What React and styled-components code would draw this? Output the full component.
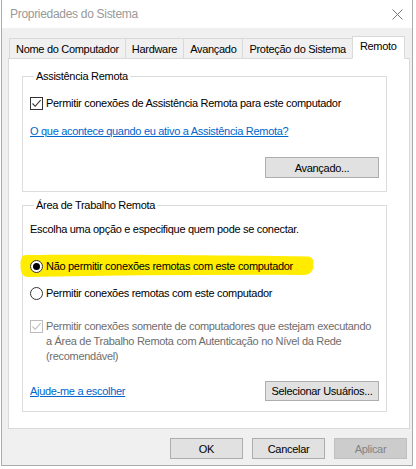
import styled, { createGlobalStyle } from "styled-components";

const GlobalStyle = createGlobalStyle`
  body {
    margin: 0;
    background: #ffffff;
    font-family: "Liberation Sans", Arial, sans-serif;
    font-size: 11px;
    letter-spacing: -0.3px;
    color: #000;
  }
`;

const Window = styled.div`
  margin-left: 1px;
  width: 412px;
  height: 466px;
  box-sizing: border-box;
  border: 1px solid #ababab;
  border-top: none;
  background: #f0f0f0;
  display: flex;
  flex-direction: column;
`;

const TitleBar = styled.div`
  height: 28px;
  background: #fff;
  display: flex;
  align-items: center;
  justify-content: space-between;
  padding: 0 9px 0 8px;
  color: #999;
  font-size: 12px;
`;

const Body = styled.div`
  padding: 7px 0 0 6px;
  display: flex;
  flex-direction: column;
`;

const TabRow = styled.div`
  display: flex;
  align-items: flex-end;
  padding-left: 1px;
  height: 23px;
  position: relative;
  z-index: 1;
`;

const Tab = styled.div`
  height: ${(p) => (p.$active ? "23px" : "20px")};
  box-sizing: border-box;
  padding: 0 ${(p) => (p.$active ? "7px" : "6px")};
  margin-left: -1px;
  margin-bottom: ${(p) => (p.$active ? "-1px" : "0")};
  border: 1px solid #d9d9d9;
  border-bottom: ${(p) => (p.$active ? "1px solid #fff" : "none")};
  background: ${(p) => (p.$active ? "#fff" : "#f0f0f0")};
  display: flex;
  align-items: ${(p) => (p.$active ? "flex-start" : "center")};
  padding-top: ${(p) => (p.$active ? "3px" : "0")};
  white-space: nowrap;
  &:first-child {
    margin-left: 0;
  }
`;

const Panel = styled.div`
  width: 402px;
  height: 371px;
  box-sizing: border-box;
  background: #fff;
  border: 1px solid #d9d9d9;
  padding: 10px 0 0 13px;
`;

const Group = styled.fieldset`
  margin: ${(p) => p.$gap || 0}px 0 0;
  width: 365px;
  box-sizing: border-box;
  border: 1px solid #dcdcdc;
  padding: 0 7px ${(p) => p.$bottom}px 7px;
  min-width: 0;
  display: flex;
  flex-direction: column;
  align-items: flex-start;
`;

const Legend = styled.legend`
  padding: 0 2px;
  margin-left: 4px;
  line-height: 15px;
`;

const Row = styled.div`
  display: flex;
  align-items: ${(p) => (p.$top ? "flex-start" : "center")};
  gap: 3px;
  line-height: 15px;
  margin-top: ${(p) => p.$mt || 0}px;
  color: ${(p) => (p.$disabled ? "#6d6d6d" : "#000")};
  position: relative;
  white-space: nowrap;
`;

const Label = styled.span`
  position: relative;
  z-index: 1;
`;

const Text = styled.div`
  line-height: 15px;
  margin-top: ${(p) => p.$mt || 0}px;
  white-space: nowrap;
`;

const Link = styled.a`
  color: #0066cc;
  text-decoration: underline;
  line-height: 15px;
  cursor: pointer;
  white-space: nowrap;
`;

const Box = styled.span`
  width: 13px;
  height: 13px;
  box-sizing: border-box;
  border: 1px solid ${(p) => (p.$disabled ? "#bcbcbc" : "#333")};
  background: #fff;
  display: inline-flex;
  align-items: center;
  justify-content: center;
  flex-shrink: 0;
  margin-top: ${(p) => (p.$disabled ? "1px" : "0")};
  position: relative;
  z-index: 1;
`;

const Radio = styled.span`
  width: 13px;
  height: 13px;
  box-sizing: border-box;
  border-radius: 50%;
  border: 1px solid #333;
  background: #fff;
  display: inline-flex;
  align-items: center;
  justify-content: center;
  flex-shrink: 0;
  position: relative;
  z-index: 1;
  &::after {
    content: "";
    width: 7px;
    height: 7px;
    border-radius: 50%;
    background: ${(p) => (p.$checked ? "#000" : "transparent")};
  }
`;

// highlighter stroke drawn behind the first option
const Highlight = styled.svg`
  position: absolute;
  left: -10px;
  top: -5px;
  width: 294px;
  height: 24px;
  z-index: 0;
`;

const Actions = styled.div`
  display: flex;
  align-items: center;
  justify-content: space-between;
  align-self: stretch;
  margin-top: ${(p) => p.$mt || 0}px;
`;

const Button = styled.button`
  width: ${(p) => p.$w || 73}px;
  height: ${(p) => p.$h || 21}px;
  box-sizing: border-box;
  border: 1px solid ${(p) => (p.disabled ? "#bfbfbf" : "#adadad")};
  background: ${(p) => (p.disabled ? "#cccccc" : "#e1e1e1")};
  color: ${(p) => (p.disabled ? "#838383" : "#000")};
  font-family: inherit;
  font-size: 11px;
  letter-spacing: -0.3px;
  white-space: nowrap;
  padding: 0;
`;

const Footer = styled.div`
  display: flex;
  justify-content: flex-end;
  gap: 9px;
  padding: 9px 5px 0 0;
`;

const Check = ({ color }) => (
  <svg width="11" height="11" viewBox="0 0 11 11">
    <path d="M1.5 5.5 L4.2 8.3 L9.6 2.2" fill="none" stroke={color} strokeWidth="1.1" />
  </svg>
);

const CloseIcon = () => (
  <svg width="11" height="11" viewBox="0 0 11 11">
    <path d="M0.5 0.5 L10.5 10.5 M10.5 0.5 L0.5 10.5" stroke="#777" strokeWidth="1" />
  </svg>
);

const tabs = ["Nome do Computador", "Hardware", "Avançado", "Proteção do Sistema", "Remoto"];

export default function App() {
  return (
    <>
      <GlobalStyle />
      <Window>
        <TitleBar>
          <span>Propriedades do Sistema</span>
          <CloseIcon />
        </TitleBar>
        <Body>
          <TabRow>
            {tabs.map((t) => (
              <Tab key={t} $active={t === "Remoto"}>
                {t}
              </Tab>
            ))}
          </TabRow>
          <Panel>
            <Group $bottom={13}>
              <Legend>Assistência Remota</Legend>
              <Row $mt={12}>
                <Box>
                  <Check color="#333" />
                </Box>
                <Label>Permitir conexões de Assistência Remota para este computador</Label>
              </Row>
              <Text $mt={13}>
                <Link>O que acontece quando eu ativo a Assistência Remota?</Link>
              </Text>
              <Actions $mt={18}>
                <span />
                <Button $w={114}>Avançado...</Button>
              </Actions>
            </Group>

            <Group $gap={6} $bottom={10}>
              <Legend>Área de Trabalho Remota</Legend>
              <Text $mt={9}>Escolha uma opção e especifique quem pode se conectar.</Text>
              <Row $mt={22}>
                <Highlight viewBox="0 0 294 24" preserveAspectRatio="none">
                  <path
                    d="M6 1 C60 0.5 160 0.5 288 2.5 C293 3 294 7 293.5 12 C293 18 290 20.5 284 21 C190 20.5 100 21.5 8 23 C2 23 0.5 18 0.5 11 C0.5 4 2 1 6 1 Z"
                    fill="#ffec00"
                  />
                </Highlight>
                <Radio $checked />
                <Label>Não permitir conexões remotas com este computador</Label>
              </Row>
              <Row $mt={12}>
                <Radio />
                <Label>Permitir conexões remotas com este computador</Label>
              </Row>
              <Row $mt={18} $top $disabled>
                <Box $disabled>
                  <Check color="#bcbcbc" />
                </Box>
                <Label>
                  Permitir conexões somente de computadores que estejam executando
                  <br />a Área de Trabalho Remota com Autenticação no Nível da Rede
                  <br />
                  (recomendável)
                </Label>
              </Row>
              <Actions $mt={17}>
                <Link>Ajude-me a escolher</Link>
                <Button $w={114} $h={20}>
                  Selecionar Usuários...
                </Button>
              </Actions>
            </Group>
          </Panel>
          <Footer>
            <Button>OK</Button>
            <Button>Cancelar</Button>
            <Button disabled>Aplicar</Button>
          </Footer>
        </Body>
      </Window>
    </>
  );
}
